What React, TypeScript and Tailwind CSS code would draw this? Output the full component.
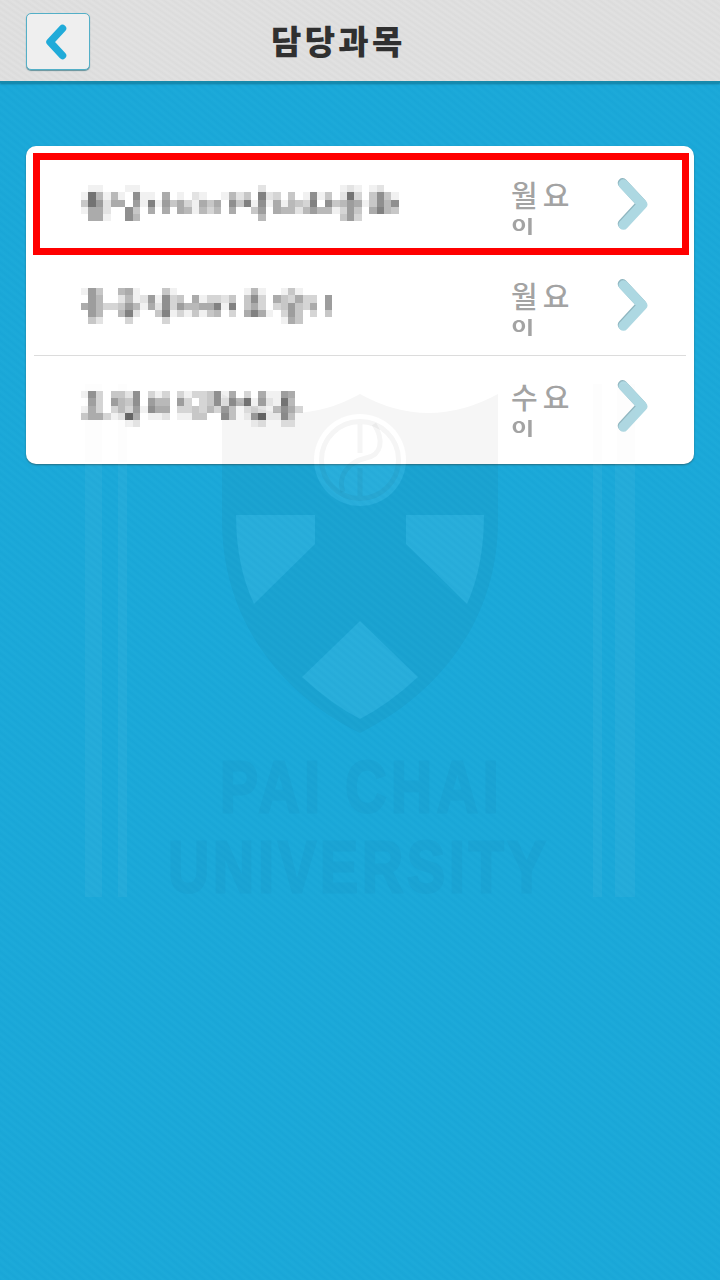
type Course = { day: string; mosaic: string[]; offset: string; highlighted?: boolean };

const courses: Course[] = [
  {
    day: '월요',
    highlighted: true,
    offset: 'pt-0',
    mosaic: [
      '0110001100000000000000002000000000012101200',
      '1a5151081106010210015240923040181402a304841',
      '4a72660719174631646084918161543908457614858',
      '1662008406060651535060047065525755137406954',
      '0661008500000000000000005000000000047300000',
    ],
  },
  {
    day: '월요',
    offset: 'pt-[4px]',
    mosaic: [
      '1740056100041000000000151001410000',
      '0750025127183406133240483064363307',
      '6753347516283755669190463034743607',
      '0750059200491314145030696103740304',
      '0420003000030000000000000001640000',
    ],
  },
  {
    day: '수요',
    offset: 'pt-[8px]',
    mosaic: [
      '183044280313031334816030611760',
      '0730754807550730348285a1721a50',
      '163035371866033435374023215863',
      '466312b60112011440084017b11840',
      '000000120000000000000001200220',
    ],
  },
];

function Mosaic({ rows }: { rows: string[] }) {
  const width = rows[0].length;
  return (
    <svg
      className="block"
      width={width * 7.39}
      height={36.7}
      viewBox={`0 0 ${width} 5`}
      preserveAspectRatio="none"
      shapeRendering="crispEdges"
      aria-hidden="true"
    >
      {rows.flatMap((row, y) =>
        row.split('').map((value, x) => {
          const gray = 255 - parseInt(value, 16) * 14;
          return value === '0' ? null : (
            <rect key={`${x}-${y}`} x={x} y={y} width="1" height="1" fill={`rgb(${gray},${gray},${gray})`} />
          );
        }),
      )}
    </svg>
  );
}

function Chevron() {
  return (
    <svg className="block" width="34" height="56" viewBox="0 0 34 56" fill="none" strokeLinecap="round" strokeLinejoin="round" aria-hidden="true">
      <path d="M5.6 6L24.5 26.4L5.6 46.8" stroke="#8fb6c0" strokeWidth="9.8" />
      <path d="M6.4 7.2L25.4 27.4L6.4 47.8" stroke="#add8e2" strokeWidth="9.8" />
    </svg>
  );
}

function CourseRow({ course }: { course: Course }) {
  return (
    <li className="relative flex h-[101px] items-center">
      {course.highlighted && (
        <div className="absolute -left-px top-[-1px] h-[102px] w-[656px] border-[7px] border-[#ff0000]" />
      )}
      <div className={`ml-[47px] w-[430px] ${course.offset}`}>
        <div className="pb-[3px]">
          <Mosaic rows={course.mosaic} />
        </div>
      </div>
      <div className="flex h-[60px] w-[106px] flex-col font-medium text-[#a3a3a3]">
        <div className="h-[39px] text-[29px] leading-[39px] tracking-[5px]">{course.day}</div>
        <div className="mt-[3px] h-[18px] origin-left text-[17px] font-bold leading-[18px] [transform:scaleX(1.5)]">이</div>
      </div>
      <Chevron />
    </li>
  );
}

function Watermark() {
  return (
    <svg className="pointer-events-none absolute inset-0" width="720" height="1280" viewBox="0 0 720 1280" aria-hidden="true">
      <defs>
        <mask id="shield-openings">
          <rect width="720" height="1280" fill="white" />
          <circle cx="360" cy="460" r="46" fill="black" />
          <path d="M236 515H315V544L254 604Q236 566 236 515ZM484 515H406V544L467 604Q484 566 484 515ZM360 621L418 677Q389 704 360 719Q331 704 302 677Z" fill="black" />
        </mask>
      </defs>
      <path
        d="M222 394Q292 432 360 394Q428 432 498 394V520C498 620 439 694 360 733C281 694 222 620 222 520Z"
        fill="#101010"
        fillOpacity="0.04"
        mask="url(#shield-openings)"
      />
      <g fill="white" fillOpacity="0.06">
        <path d="M236 515H315V544L254 604Q236 566 236 515ZM484 515H406V544L467 604Q484 566 484 515ZM360 621L418 677Q389 704 360 719Q331 704 302 677Z" />
        <circle cx="360" cy="460" r="46" />
      </g>
      <g fill="none" stroke="#101010" strokeOpacity="0.045" strokeWidth="5">
        <circle cx="360" cy="460" r="38.5" />
        <path d="M360 424V453M360 468V496" />
        <path d="M374 424C384 440 382 455 366 458C349 462 337 475 343 492" />
      </g>
      <path d="M85 380H102V897H85ZM118 380H127V897H118ZM593 380H602V897H593ZM615 380H635V897H615Z" fill="white" fillOpacity="0.045" />
      <path d="M85 384H102V462H85ZM118 384H127V462H118ZM593 384H602V462H593ZM617 384H635V462H617Z" fill="black" fillOpacity="0.006" />
      <g fill="#17446f" stroke="#17446f" strokeWidth="3" opacity="0.045" fontFamily="'Liberation Sans', sans-serif" fontWeight="700" fontSize="73">
        <text transform="translate(220 812) scale(0.78 1)" textLength="357" lengthAdjust="spacing">PAI CHAI</text>
        <text transform="translate(168 892) scale(0.78 1)" textLength="484" lengthAdjust="spacing">UNIVERSITY</text>
      </g>
    </svg>
  );
}

export default function App() {
  return (
    <div className="relative h-[1280px] w-[720px] overflow-hidden bg-[#1aa9d9] bg-[repeating-linear-gradient(40deg,rgba(0,80,150,0.03)_0px,rgba(255,255,255,0.01)_3px,rgba(0,80,150,0.03)_6px)] font-['Noto_Sans_CJK_KR',sans-serif]">
      <header className="flex h-[83px] items-start border-b-2 border-[#168aac] bg-[#dedede] bg-[repeating-linear-gradient(35deg,rgba(0,0,0,0.012)_0px,rgba(255,255,255,0.1)_2.5px,rgba(0,0,0,0.012)_5px)] pl-[26px] shadow-[0_1px_2px_#117ca0]">
        <button aria-label="뒤로" className="mt-[13px] flex h-[57px] w-[64px] items-center justify-center rounded-[5px] border border-[#53afc7] bg-[#efefef] shadow-[0_1px_1px_#65929b]">
          <svg width="24" height="38" viewBox="0 0 24 38" fill="none" className="mr-1" aria-hidden="true">
            <path d="M18.5 5.5L6 19L18.5 32.5" stroke="#20abd9" strokeWidth="7.5" strokeLinecap="round" strokeLinejoin="round" />
          </svg>
        </button>
        <h1 className="ml-[181px] mt-[18px] text-[33px] font-black leading-[44px] tracking-[3.3px] text-[#303030]">담당과목</h1>
      </header>
      <main className="px-[26px] pt-[63px]">
        <ul className="h-[318px] rounded-[10px] bg-white px-[8px] pt-[8px] shadow-[0_1px_2px_#266e83]">
          <CourseRow course={courses[0]} />
          <CourseRow course={courses[1]} />
          <li className="-mt-px h-px bg-[#dcdcdc]" />
          <CourseRow course={courses[2]} />
        </ul>
      </main>
      <Watermark />
    </div>
  );
}
